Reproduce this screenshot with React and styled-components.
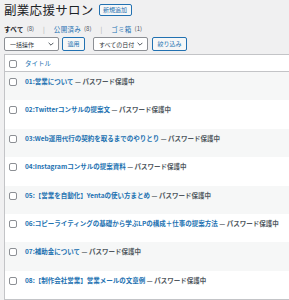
import React from "react";
import styled, { createGlobalStyle } from "styled-components";

const Global = createGlobalStyle`
  html, body {
    margin: 0;
    background: #f0f0f1;
    overflow: hidden;
  }
  body {
    font-family: "Noto Sans CJK JP", "Noto Sans", sans-serif;
    color: #3c434a;
  }
`;

const Wrap = styled.div`
  padding: 3px 0 0 4px;
`;

const TitleBar = styled.div`
  display: flex;
  align-items: center;
  gap: 5px;
`;

const Title = styled.h1`
  margin: 0;
  font-size: 12.5px;
  font-weight: 400;
  line-height: 14px;
  letter-spacing: 0.3px;
  color: #1d2327;
`;

const Button = styled.span`
  display: inline-flex;
  align-items: center;
  justify-content: center;
  box-sizing: border-box;
  flex: none;
  height: ${({ $h }) => $h || 14}px;
  width: ${({ $w }) => $w}px;
  border: 1px solid #2271b1;
  border-radius: 2px;
  background: #f6f7f7;
  color: #2271b1;
  font-size: 6px;
  line-height: 1;
  white-space: nowrap;
`;

const Views = styled.div`
  margin-top: 7px;
  display: flex;
  align-items: center;
  gap: 3px;
  font-size: 6.5px;
  line-height: 10px;
  color: #50575e;
`;

const ViewLink = styled.span`
  color: ${({ $current }) => ($current ? "#1d2327" : "#2271b1")};
  font-weight: ${({ $current }) => ($current ? 600 : 400)};
  letter-spacing: 0.3px;
`;

const Count = styled.span`
  color: #50575e;
  font-size: 6px;
`;

const Sep = styled.span`
  color: #a7aaad;
  margin: 0 6px;
`;

const Actions = styled.div`
  margin-top: 3px;
  display: flex;
  align-items: center;
  height: 14px;
`;

const Select = styled.span`
  box-sizing: border-box;
  flex: none;
  display: flex;
  align-items: center;
  justify-content: space-between;
  width: ${({ $w }) => $w}px;
  height: 14px;
  margin-right: ${({ $mr }) => $mr}px;
  padding: 0 4px 0 5px;
  border: 1px solid #8c8f94;
  border-radius: 2px;
  background: #fff;
  color: #2c3338;
  font-size: 6px;
  white-space: nowrap;
`;

const Gap = styled.span`
  display: inline-block;
  flex: none;
  width: ${({ $w }) => $w}px;
`;

const List = styled.div`
  margin-top: 3px;
  margin-right: -4px;
  border: 1px solid #c3c4c7;
  border-right: none;
  background: #fff;
`;

const Head = styled.div`
  display: flex;
  align-items: center;
  height: 16px;
  padding-left: 4px;
  gap: 8px;
  border-bottom: 1px solid #c3c4c7;
  font-size: 6.5px;
  color: #2271b1;
`;

const Row = styled.div`
  display: flex;
  align-items: flex-start;
  height: 28.4px;
  padding: 4px 0 0 4px;
  box-sizing: border-box;
  gap: 8px;
  background: ${({ $alt }) => ($alt ? "#f6f7f7" : "#fff")};
`;

const Box = styled.span`
  flex: none;
  box-sizing: border-box;
  width: 8px;
  height: 8px;
  margin-top: ${({ $mt }) => $mt || 0}px;
  border: 1px solid #8c8f94;
  border-radius: 2px;
  background: #fff;
`;

const RowText = styled.div`
  font-size: 6.5px;
  line-height: 10px;
  font-weight: 600;
  white-space: nowrap;
`;

const PostLink = styled.span`
  color: #2271b1;
`;

const State = styled.span`
  color: #50575e;
`;

const Chevron = () => (
  <svg width="6" height="4" viewBox="0 0 6 4">
    <path d="M0.6 0.8 L3 3.2 L5.4 0.8" fill="none" stroke="#50575e" strokeWidth="1" />
  </svg>
);

const posts = [
  "01:営業について",
  "02:Twitterコンサルの提案文",
  "03:Web運用代行の契約を取るまでのやりとり",
  "04:Instagramコンサルの提案資料",
  "05:【営業を自動化】Yentaの使い方まとめ",
  "06:コピーライティングの基礎から学ぶLPの構成＋仕事の提案方法",
  "07:補助金について",
  "08:【制作会社営業】営業メールの文章例",
];

export default function App() {
  return (
    <Wrap>
      <Global />
      <TitleBar>
        <Title>副業応援サロン</Title>
        <Button $w={33} $h={12}>新規追加</Button>
      </TitleBar>
      <Views>
        <ViewLink $current>すべて</ViewLink>
        <Count>(8)</Count>
        <Sep>|</Sep>
        <ViewLink>公開済み</ViewLink>
        <Count>(8)</Count>
        <Sep>|</Sep>
        <ViewLink>ゴミ箱</ViewLink>
        <Count>(1)</Count>
      </Views>
      <Actions>
        <Select $w={55} $mr={3}>
          一括操作
          <Chevron />
        </Select>
        <Button $w={23}>適用</Button>
        <Gap $w={8} />
        <Select $w={55} $mr={4}>
          すべての日付
          <Chevron />
        </Select>
        <Button $w={35}>絞り込み</Button>
      </Actions>
      <List>
        <Head>
          <Box $mt={1} />
          <span>タイトル</span>
        </Head>
        {posts.map((p, i) => (
          <Row key={i} $alt={i % 2 === 0}>
            <Box $mt={2} />
            <RowText>
              <PostLink>{p}</PostLink>
              <State> — パスワード保護中</State>
            </RowText>
          </Row>
        ))}
      </List>
    </Wrap>
  );
}
